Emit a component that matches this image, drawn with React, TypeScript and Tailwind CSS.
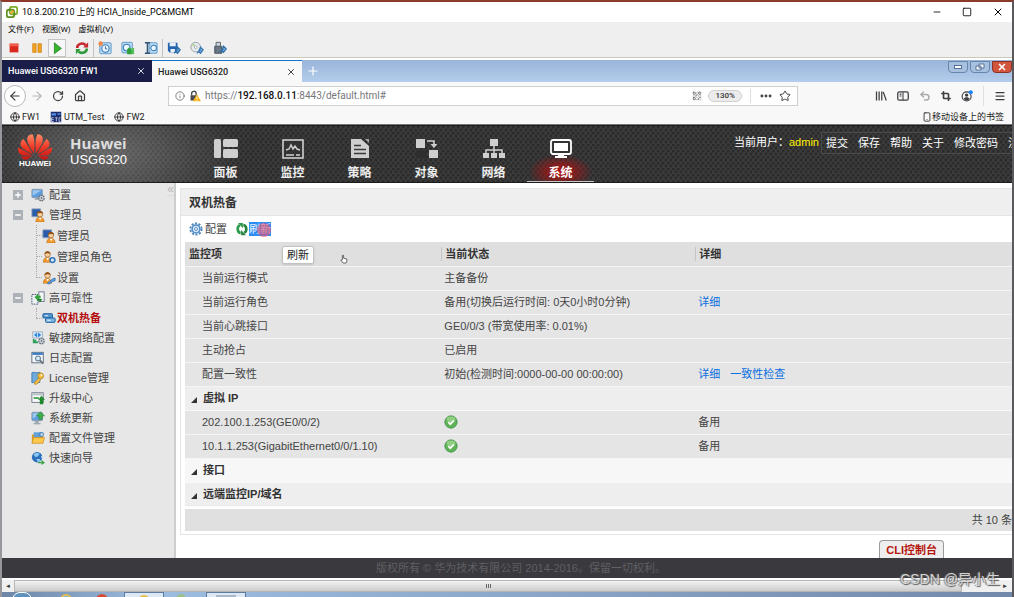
import React, { useState } from "react";
import {
  ArrowLeft,
  ArrowRight,
  Crop,
  Ellipsis,
  Globe,
  House,
  Info,
  Menu,
  Minus,
  Plus,
  QrCode,
  RotateCw,
  Smartphone,
  Square,
  Star,
  Undo2,
  X,
} from "lucide-react";
import { SiHuawei } from "react-icons/si";

type IconProps = { className?: string };

const Svg = ({
  className = "size-3.5",
  children,
}: IconProps & { children: React.ReactNode }) => (
  <svg viewBox="0 0 16 16" className={`shrink-0 ${className}`} fill="none" aria-hidden="true">
    {children}
  </svg>
);

/* ---------- console toolbar icons ---------- */

const VmLogo = () => (
  <Svg className="size-3">
    <rect x="5" y="1" width="10" height="10" rx="3" stroke="#7fae2c" strokeWidth="2.4" />
    <rect x="1" y="5" width="10" height="10" rx="3" stroke="#5f8f1f" strokeWidth="2.4" />
    <path d="M6 10l4-4" stroke="#e8a824" strokeWidth="2.4" />
  </Svg>
);

const StopIcon = () => (
  <Svg>
    <rect x="3" y="3" width="10" height="10" fill="#d9281c" />
    <path d="M3 3h10v3H3z" fill="#f0604f" />
  </Svg>
);

const PauseIcon = () => (
  <Svg>
    <path d="M3 3h4v10H3zM9 3h4v10H9z" fill="#f3a01c" stroke="#c97c10" strokeWidth=".7" />
  </Svg>
);

const PlayIcon = () => (
  <Svg>
    <path d="M5 2l8 6.500-8 6z" fill="#35b42c" stroke="#1d7d1d" strokeWidth=".8" />
  </Svg>
);

const ResetIcon = () => (
  <Svg>
    <path d="M2.500 8a5.500 5 0 0 1 9.500-3.500" stroke="#c5252b" strokeWidth="3" />
    <path d="M9.500 7.500h5.500V1.500z" fill="#c5252b" />
    <path d="M13.500 8.500a5.500 5 0 0 1-9.500 3.500" stroke="#2f9a3c" strokeWidth="3" />
    <path d="M6.500 9H1v6z" fill="#2f9a3c" />
  </Svg>
);

const SnapshotIcon = () => (
  <Svg>
    <rect x="2" y="2" width="13" height="12.500" rx="1" fill="#b9dcf4" stroke="#5c93c4" />
    <circle cx="8.500" cy="8.500" r="4.200" fill="#eef7fd" stroke="#3c7fbd" strokeWidth="1.300" />
    <path d="M8.500 6v3h2" stroke="#2c5f95" />
    <circle cx="3" cy="3" r="2.600" fill="#f08a4a" />
  </Svg>
);

const RevertIcon = () => (
  <Svg>
    <rect x="1" y="1.500" width="12" height="12" rx="1" fill="#b9dcf4" stroke="#5c93c4" />
    <circle cx="6.500" cy="7.500" r="3.800" fill="#eef7fd" stroke="#3c7fbd" strokeWidth="1.200" />
    <path d="M7 15V9.500l2.500-2.500 3 3V15z" fill="#2fa13a" />
    <path d="M12 15V8h3v7z" fill="#57c05a" />
  </Svg>
);

const ManageIcon = () => (
  <Svg>
    <rect x="6" y="2" width="9" height="12" rx="1" fill="#b9dcf4" stroke="#5c93c4" />
    <circle cx="11" cy="8" r="3.200" fill="#eef7fd" stroke="#3c7fbd" strokeWidth="1.200" />
    <path d="M1 2h6M1 14h6M4 2v12" stroke="#2f5579" strokeWidth="1.800" />
  </Svg>
);

const FloppyIcon = () => (
  <Svg>
    <path d="M1 2h11v11H3l-2-2z" fill="#2563ae" />
    <path d="M3 2h7v4H3zM4 9h5v4H4z" fill="#e8f1fa" />
    <path d="M8 14l4-4M12 7l3 3-3 4-2-2z" fill="#7db5e4" stroke="#2f6ea8" strokeWidth="1.600" />
  </Svg>
);

const DiscIcon = () => (
  <Svg>
    <circle cx="6.500" cy="7" r="5.500" fill="#e4e9ec" stroke="#8f9ba3" />
    <path d="M6.500 7L2 4.500 4 2.500z" fill="#aed58a" />
    <circle cx="6.500" cy="7" r="1.500" fill="#fff" stroke="#8f9ba3" strokeWidth=".8" />
    <path d="M8 14l4-4M12 7l3 3-3 4-2-2z" fill="#7db5e4" stroke="#3c7ab2" strokeWidth="1.500" />
  </Svg>
);

const UsbIcon = () => (
  <Svg>
    <path d="M2 6h8v8H2z" fill="#6a7885" stroke="#3c4852" />
    <path d="M3.500 1.500h5V6h-5z" fill="#cfd6db" stroke="#4d5963" />
    <path d="M8 13l4-4M12 6l3 3-3 4-2-2z" fill="#7db5e4" stroke="#2f6ea8" strokeWidth="1.500" />
  </Svg>
);

/* ---------- browser icons ---------- */

const LibraryIcon = () => (
  <Svg className="size-3">
    <path d="M2 2v12M5.500 2v12M9 2v12M11 2.500l4 11.500" stroke="#3f3f43" strokeWidth="1.700" />
  </Svg>
);

const SidebarIcon = () => (
  <Svg className="size-3">
    <rect x="1" y="2.500" width="14" height="11" rx="2" stroke="#3f3f43" strokeWidth="1.700" />
    <path d="M8 2.500v11M3.500 5.500h2.500M3.500 8h2.500" stroke="#3f3f43" strokeWidth="1.400" />
  </Svg>
);

const UndoIcon = () => <Undo2 className="size-3" strokeWidth={3} />;

const AccountIcon = () => (
  <Svg className="size-3">
    <circle cx="7.500" cy="8.500" r="6" stroke="#3f3f43" strokeWidth="1.500" />
    <circle cx="7.500" cy="6.800" r="2.300" fill="#3f3f43" />
    <path d="M3.500 12c1-3 7-3 8 0-2 2.300-6 2.300-8 0z" fill="#3f3f43" />
    <circle cx="13" cy="3" r="2.800" fill="#1a84ff" />
  </Svg>
);

const InsecureLock = () => (
  <Svg className="size-3">
    <path d="M3.500 7V5a3 3 0 0 1 6-.5V7" stroke="#4b4b4f" strokeWidth="1.800" />
    <path d="M2 7h9v7H2z" fill="#4b4b4f" />
    <path d="M10.500 5.500L16 15H5z" fill="#f9b31c" />
    <path d="M10.500 9v3M10.500 13v1" stroke="#fff" strokeWidth="1.200" />
  </Svg>
);

const UtmIcon = () => (
  <Svg className="size-3">
    <path d="M1 1h14v14H1z" fill="#1d2c6d" />
    <path d="M2 3h6v3H2zM10 3h4v2h-4z" fill="#4e8ee0" />
    <path d="M2 9h3M2 11.500h3M2 9v5h3M7 9h3M8.500 9v5M12 9v5M12 9h2M12 14h2" stroke="#cfe0f7" />
  </Svg>
);

/* ---------- main navigation icons ---------- */

const PanelNav = () => (
  <svg viewBox="0 0 24 20" className="h-5 w-6" fill="#cfcfcf" aria-hidden="true">
    <rect x="0" y="0" width="7" height="19" rx="1.500" />
    <rect x="9" y="0" width="15" height="8" rx="1.500" />
    <rect x="9" y="10" width="15" height="9" rx="1.500" />
  </svg>
);

const MonitorNav = () => (
  <svg viewBox="0 0 24 20" className="h-5 w-6" fill="none" stroke="#cfcfcf" aria-hidden="true">
    <rect x="2" y="1" width="20" height="18" fill="#333" strokeWidth="1.600" />
    <path d="M5 11l3-1 2-4 2 4 2-3 2 3 3 1M5 16h8M15 16h4" strokeWidth="1.500" />
  </svg>
);

const PolicyNav = () => (
  <svg viewBox="0 0 24 20" className="h-5 w-6" aria-hidden="true">
    <path d="M3 0h10l8 7v12H3z" fill="#cfcfcf" />
    <path d="M17 0h4v4z" fill="#a5a5a5" />
    <path d="M6 6.500h7M6 10.500h12M6 14.500h12" stroke="#3a3a3a" strokeWidth="1.700" />
  </svg>
);

const ObjectNav = () => (
  <svg viewBox="0 0 24 20" className="h-5 w-6" aria-hidden="true">
    <path d="M1 0h9v9H1zM14 11h9v8h-9z" fill="#cfcfcf" />
    <path d="M12 2h7v4" stroke="#cfcfcf" strokeWidth="1.600" fill="none" />
    <path d="M15.500 5h7L19 9z" fill="#cfcfcf" />
    <path d="M1 11h11v8H1z" fill="#2e2e2e" />
  </svg>
);

const NetworkNav = () => (
  <svg viewBox="0 0 24 20" className="h-5 w-6" fill="#cfcfcf" aria-hidden="true">
    <rect x="8" y="0" width="8" height="7" />
    <path d="M12 7v8M4 15v-4h16v4" fill="none" stroke="#cfcfcf" strokeWidth="1.500" />
    <path d="M1 14h6v5H1zM9 14h6v5H9zM17 14h6v5h-6z" />
  </svg>
);

const SystemNav = () => (
  <svg viewBox="0 0 24 20" className="h-5 w-6" aria-hidden="true">
    <rect x="2" y="1" width="20" height="14" rx="2" fill="#333" stroke="#fff" strokeWidth="1.800" />
    <path d="M5 4h14v8H5zM9 15h6v2h3v2H6v-2h3z" fill="#fff" />
  </svg>
);

/* ---------- tree icons ---------- */

const Screen = () => (
  <>
    <rect x="1" y="1.500" width="12" height="9.500" rx="1" fill="#5e9ee0" stroke="#8b9aa8" />
    <path d="M2 2.500h10l-10 6z" fill="#9cc8f0" />
    <path d="M5 11h4v2.500H4z" fill="#97a3ad" />
  </>
);

const Gear = () => (
  <>
    <circle cx="12" cy="11.500" r="3" fill="#e4e7ea" stroke="#66717b" strokeWidth="1.600" strokeDasharray="2 .6" />
    <circle cx="12" cy="11.500" r="1.100" fill="#66717b" />
  </>
);

const Person = () => (
  <>
    <path d="M3.500 15c0-4 2-5.500 4.500-5.500s5 1.500 5 5.500z" fill="#f29a2c" stroke="#b26614" strokeWidth=".6" />
    <path d="M7 10l1.500 3L10 10z" fill="#fff" />
    <circle cx="8.300" cy="6" r="3.200" fill="#f7cf9d" stroke="#8c531d" strokeWidth=".7" />
    <path d="M5 5.500C5 1.500 11.700 1.500 11.700 5.500 10 4.300 7 4.300 5 5.500z" fill="#8f4f16" />
  </>
);

const ConfigIcon = () => <Svg><Screen /><Gear /></Svg>;

const AdminIcon = () => (
  <Svg>
    <path d="M1 1h10v9H1z" fill="#2a5caa" stroke="#8fa2b8" />
    <g transform="translate(2 1)"><Person /></g>
  </Svg>
);

const RoleIcon = () => (
  <Svg>
    <g transform="translate(-2 -1)"><Person /></g>
    <circle cx="12" cy="11.500" r="2.700" fill="#d9ecfb" stroke="#3478bb" strokeWidth="1.800" />
  </Svg>
);

const UserSetIcon = () => (
  <Svg>
    <g transform="translate(-2 -1)"><Person /></g>
    <path d="M6 14l6-5 3-1v3l-3 1-4 3z" fill="#5b9ee0" stroke="#2d6cae" strokeWidth=".8" />
  </Svg>
);

const ReliabilityIcon = () => (
  <Svg>
    <rect x="1" y="4" width="7" height="11" fill="#eef1f4" stroke="#3f4d70" strokeDasharray="2 1" />
    <rect x="9" y="1" width="6" height="11" fill="#f5f7f9" stroke="#667080" />
    <path d="M4 7l4-4v2.500h3v3H8V11z" fill="#35a53b" />
    <path d="M13 9l-3 4v-2H7V9z" fill="#1f8228" />
  </Svg>
);

const HotStandbyIcon = () => (
  <Svg>
    <rect x="1" y="3" width="11" height="5" rx="1" fill="#4f93cf" stroke="#1e5c98" />
    <rect x="4" y="8" width="11" height="5" rx="1" fill="#77b3e2" stroke="#1e5c98" />
    <path d="M3 5.500h4M6 10.500h4" stroke="#e6f3fd" strokeWidth="1.200" />
  </Svg>
);

const AgileIcon = () => (
  <Svg>
    <rect x="2" y="1" width="11" height="7" fill="#dcecf9" stroke="#9aa8b5" />
    <path d="M4 4.500l2.500-2v4zM11 4.500l-2.500-2v4z" fill="#1f7fe0" stroke="#1f7fe0" />
    <path d="M3 9v4h5M3 11h3" stroke="#2da05c" strokeWidth="1.800" />
    <Gear />
  </Svg>
);

const LogIcon = () => (
  <Svg>
    <rect x="1" y="1.500" width="13" height="12" fill="#f4f7fa" stroke="#53657a" />
    <path d="M1.500 2h12v2.500h-12z" fill="#3c80c8" />
    <circle cx="8" cy="8.500" r="2.800" fill="#d4e8f8" stroke="#6a7f93" strokeWidth="1.200" />
    <path d="M10 10.500l4 4" stroke="#68727c" strokeWidth="2" />
  </Svg>
);

const LicenseIcon = () => (
  <Svg>
    <path d="M1 2c3-1.500 5 1 9-.5V13c-4 1.500-6-1-9 .5z" fill="#6fa9de" stroke="#3f77ae" />
    <circle cx="11" cy="5.500" r="3.300" fill="#f7c247" stroke="#b57d15" />
    <path d="M9 8l-5 5v2h2.500l4.500-5z" fill="#f7c247" stroke="#b57d15" strokeWidth=".8" />
    <circle cx="12" cy="4.700" r="1" fill="#fff" />
  </Svg>
);

const UpgradeIcon = () => (
  <Svg>
    <rect x="1" y="2" width="13" height="11" fill="#f6f8f9" stroke="#6c7681" />
    <path d="M1.500 2.500h12V5h-12z" fill="#b9c3cc" />
    <path d="M3 8h6" stroke="#2c9434" strokeWidth="1.800" />
    <path d="M12 5.500l4 4.500h-2v5h-4v-5H8z" fill="#1f8a2b" />
  </Svg>
);

const UpdateIcon = () => (
  <Svg>
    <Screen />
    <path d="M10.500 1l5 4.500h-2.500v4H9v-4H6z" fill="#3fae4b" stroke="#1f7a2b" strokeWidth=".6" />
    <path d="M3 14.500h8" stroke="#9ba5ae" strokeWidth="1.500" />
  </Svg>
);

const FolderIcon = () => (
  <Svg>
    <path d="M1 4h5l1.500 2H14v8H1z" fill="#e39b1d" />
    <path d="M3 1.500h8v6H3z" fill="#5f9fda" />
    <path d="M3 7.500h12.500L13.500 14H1z" fill="#fbc94e" stroke="#c78618" strokeWidth=".7" />
    <circle cx="12" cy="4" r="2.200" stroke="#4a87c2" strokeWidth="1.300" />
  </Svg>
);

const WizardIcon = () => (
  <Svg>
    <circle cx="7" cy="7" r="6" fill="#2a6fb8" />
    <path d="M3 4c2-2 5-2 7-1L8 6 5 7zM6 9l4 0 1 2-3 2z" fill="#8cc7f4" />
    <path d="M8 12.500h4V10l4 3.500-4 2.500v-2H8z" fill="#3fa446" />
    <path d="M12 6l2 4" stroke="#d3e7f7" strokeWidth="1.600" />
  </Svg>
);

const BlueGear = () => (
  <Svg>
    <circle cx="8" cy="8" r="6.500" stroke="#4e83b8" strokeWidth="2" strokeDasharray="2.400 1.700" />
    <circle cx="8" cy="8" r="4.500" fill="#d6e8f7" stroke="#4e8ac4" strokeWidth="1.800" />
    <circle cx="8" cy="8" r="1.700" fill="#fff" stroke="#4e83b8" />
  </Svg>
);

/* two arrows circling each other */
const RefreshIcon = () => (
  <Svg>
    <path d="M6.500 12.500C2.500 12 1.800 5.500 5.500 3.500" stroke="#2f9a4c" strokeWidth="3" />
    <path d="M3.500 1h5.500v6z" fill="#2f9a4c" />
    <path d="M9.500 3.500c4 .5 4.700 7 1 9" stroke="#25853f" strokeWidth="3" />
    <path d="M12.500 15H7V9z" fill="#25853f" />
  </Svg>
);

const OkIcon = () => (
  <svg viewBox="0 0 16 16" className="size-3.5" role="img" aria-label="正常">
    <circle cx="8" cy="8" r="7" fill="#5db356" stroke="#3f8f43" />
    <ellipse cx="8" cy="5" rx="5" ry="3.200" fill="#8fd083" />
    <path d="M4.800 8l2.300 2.500 4.200-4" fill="none" stroke="#fff" strokeWidth="2" />
  </svg>
);

/* ---------- data ---------- */

const vmTools = [
  { label: "关机", Icon: StopIcon },
  { label: "挂起", Icon: PauseIcon },
  { label: "启动", Icon: PlayIcon },
  { label: "重置", Icon: ResetIcon },
  { label: "生成快照", Icon: SnapshotIcon },
  { label: "恢复快照", Icon: RevertIcon },
  { label: "管理快照", Icon: ManageIcon },
  { label: "软盘", Icon: FloppyIcon },
  { label: "光盘", Icon: DiscIcon },
  { label: "USB", Icon: UsbIcon },
];

const navItems = [
  { name: "面板", Icon: PanelNav },
  { name: "监控", Icon: MonitorNav },
  { name: "策略", Icon: PolicyNav },
  { name: "对象", Icon: ObjectNav },
  { name: "网络", Icon: NetworkNav },
  { name: "系统", Icon: SystemNav },
];

type TreeNode = {
  name: string;
  Icon: React.FC;
  state?: "open" | "closed";
  children?: { name: string; Icon: React.FC }[];
};

const tree: TreeNode[] = [
  { name: "配置", Icon: ConfigIcon, state: "closed" },
  {
    name: "管理员",
    Icon: AdminIcon,
    state: "open",
    children: [
      { name: "管理员", Icon: AdminIcon },
      { name: "管理员角色", Icon: RoleIcon },
      { name: "设置", Icon: UserSetIcon },
    ],
  },
  {
    name: "高可靠性",
    Icon: ReliabilityIcon,
    state: "open",
    children: [{ name: "双机热备", Icon: HotStandbyIcon }],
  },
  { name: "敏捷网络配置", Icon: AgileIcon },
  { name: "日志配置", Icon: LogIcon },
  { name: "License管理", Icon: LicenseIcon },
  { name: "升级中心", Icon: UpgradeIcon },
  { name: "系统更新", Icon: UpdateIcon },
  { name: "配置文件管理", Icon: FolderIcon },
  { name: "快速向导", Icon: WizardIcon },
];

const statusRows = [
  { item: "当前运行模式", status: "主备备份", links: [] },
  { item: "当前运行角色", status: "备用(切换后运行时间: 0天0小时0分钟)", links: ["详细"] },
  { item: "当前心跳接口", status: "GE0/0/3 (带宽使用率: 0.01%)", links: [] },
  { item: "主动抢占", status: "已启用", links: [] },
  { item: "配置一致性", status: "初始(检测时间:0000-00-00 00:00:00)", links: ["详细", "一致性检查"] },
];

const virtualIps = ["202.100.1.253(GE0/0/2)", "10.1.1.253(GigabitEthernet0/0/1.10)"];

/* ---------- sections ---------- */

const ConsoleBar = () => (
  <div className="font-[Roboto,'Noto_Sans_CJK_SC',sans-serif] text-black">
    <div className="flex h-5 items-center bg-white pl-1 pr-2">
      <VmLogo />
      <h1 className="ml-1 text-[9px] leading-5">10.8.200.210 上的 HCIA_Inside_PC&amp;MGMT</h1>
      <div className="ml-auto flex items-center gap-5">
        <button aria-label="最小化"><Minus className="size-2.5" /></button>
        <button aria-label="最大化"><Square className="size-2.5" /></button>
        <button aria-label="关闭"><X className="size-3" /></button>
      </div>
    </div>
    <div className="flex h-4 items-center gap-2 bg-[#efefef] pl-1.5 text-[8px] leading-4">
      <button>文件(F)</button>
      <button>视图(W)</button>
      <button>虚拟机(V)</button>
    </div>
    <div className="flex h-5 items-center border-b border-[#c9c8bd] bg-[#efefef]">
      {vmTools.map(({ label, Icon }, i) => (
        <button
          key={label}
          aria-label={label}
          className={`flex h-[18px] items-center justify-center ${
            i === 2
              ? "w-[18px] border border-[#c4c4c4] bg-[#f7f7f7]"
              : i === 4 || i === 7
                ? "w-[23px] border-l border-[#c4c4c4]"
                : "w-[23px]"
          } ${i === 3 ? "ml-1" : ""}`}
        >
          <Icon />
        </button>
      ))}
    </div>
    <div className="h-0.5 bg-white" />
  </div>
);

const TabStrip = () => (
  <div className="flex h-[22px] bg-linear-to-b from-[#98b4d8] to-[#b4cdec] text-[9px] font-medium leading-5">
    <div className="flex w-[150px] items-center justify-between bg-[#191d48] px-1.5 text-white">
      <button>Huawei USG6320 FW1</button>
      <button aria-label="关闭标签页"><X className="size-2.5" /></button>
    </div>
    <div className="flex w-[150px] items-center justify-between border-t border-[#1473d2] bg-[#f8f8f8] px-1.5 text-[#222]">
      <button>Huawei USG6320</button>
      <button aria-label="关闭标签页"><X className="size-2.5" /></button>
    </div>
    <button aria-label="新标签页" className="px-1 text-white"><Plus className="size-3.5" /></button>
    <div className="ml-auto flex h-3 gap-0.5 pt-px text-white">
      <button aria-label="最小化" className="flex h-3 w-5 items-center justify-center rounded-b-sm border border-[#6885ab] bg-[#a7c0df]">
        <span className="h-1 w-2 border border-[#56709a] bg-white" />
      </button>
      <button aria-label="还原" className="flex h-3 w-5 items-center justify-center rounded-b-sm border border-[#6885ab] bg-[#a7c0df]">
        <svg viewBox="0 0 10 8" className="h-2 w-2.5" fill="#fff" stroke="#56709a" aria-hidden="true">
          <path d="M4 1h5v4H4zM1 3h5v4H1z" />
        </svg>
      </button>
      <button aria-label="关闭" className="flex h-3 w-5 items-center justify-center rounded-b-sm border border-[#8c3428] bg-[#d2553e]">
        <X className="size-2.5" strokeWidth={4} />
      </button>
    </div>
  </div>
);

const AddressBar = () => (
  <div className="flex h-[27px] items-center bg-[#f8f8f8] pr-1.5 text-[#3f3f43]">
    <button aria-label="后退" className="ml-0.5 flex size-[22px] items-center justify-center rounded-full border border-[#b9b9b9] bg-white">
      <ArrowLeft className="size-3.5" />
    </button>
    <button aria-label="前进" className="ml-1 text-[#b5b5b5]"><ArrowRight className="size-3.5" /></button>
    <button aria-label="刷新" className="ml-2"><RotateCw className="size-3" strokeWidth={2.5} /></button>
    <button aria-label="主页" className="ml-2.5"><House className="size-3" strokeWidth={2.5} /></button>
    <div className="ml-[82px] flex h-5 w-[630px] items-center border border-[#cfcfcf] bg-white px-1.5">
      <Info className="size-2.5 text-[#6b6b6f]" />
      <span className="ml-1"><InsecureLock /></span>
      <div className="relative ml-1 h-4 flex-1 text-[10px] leading-4">
        <input
          id="url"
          type="text"
          aria-label="地址"
          defaultValue="https://192.168.0.11:8443/default.html#"
          className="peer absolute inset-0 w-full bg-transparent text-transparent outline-none focus:text-black"
        />
        <label htmlFor="url" className="text-[#77777b] peer-focus:invisible">
          https://<span className="font-medium text-[#111]">192.168.0.11</span>:8443/default.html#
        </label>
      </div>
      <button aria-label="二维码"><QrCode className="size-2.5 text-[#66666a]" /></button>
      <button className="ml-1.5 h-3 rounded-full border border-[#d0d0d0] bg-[#ececec] px-1.5 text-[8px] font-semibold leading-2.5">130%</button>
      <span className="mx-2 h-3.5 w-px bg-[#dedede]" />
      <button aria-label="更多"><Ellipsis className="size-3.5" strokeWidth={3} /></button>
      <button aria-label="收藏" className="ml-1.5"><Star className="size-3" /></button>
    </div>
    <div className="ml-auto flex items-center gap-2.5">
      <button aria-label="书库"><LibraryIcon /></button>
      <button aria-label="侧栏"><SidebarIcon /></button>
      <button aria-label="撤销" className="text-[#ababab]"><UndoIcon /></button>
      <button aria-label="截图"><Crop className="size-2.5" strokeWidth={4} /></button>
      <button aria-label="账户"><AccountIcon /></button>
      <span className="h-5 w-px bg-[#e0e0e0]" />
      <button aria-label="菜单"><Menu className="size-3" strokeWidth={2.5} /></button>
    </div>
  </div>
);

const Bookmarks = () => (
  <div className="flex h-4 items-center gap-2.5 border-b border-[#77777a] bg-[#f8f8f8] px-2 text-[9px] leading-4 text-[#222]">
    <a href="#fw1" className="flex items-center gap-0.5"><Globe className="size-2.5" />FW1</a>
    <a href="#utm" className="flex items-center gap-0.5"><UtmIcon />UTM_Test</a>
    <a href="#fw2" className="flex items-center gap-0.5"><Globe className="size-2.5" />FW2</a>
    <a href="#mobile" className="ml-auto flex items-center"><Smartphone className="size-2.5" />移动设备上的书签</a>
  </div>
);

const Header = () => (
  <header className="flex h-[58px] overflow-hidden border-y border-[#1c1c1c] bg-[#3b3b3c] bg-[radial-gradient(ellipse_130px_70px_at_105px_28px,#bbbbbb66,transparent),radial-gradient(circle_at_1px_1px,#2a2a2a_1px,transparent_2px),radial-gradient(circle_at_4px_4px,#2a2a2a_1px,transparent_2px)] bg-[size:100%_100%,5px_6px,5px_6px]">
    <div className="flex w-[190px] shrink-0 pl-[15px]">
      <div className="flex w-9 flex-col items-center pt-1">
        <svg className="absolute size-0" aria-hidden="true">
          <linearGradient id="petal" x1="0" y1="0" x2="0" y2="1">
            <stop offset="0" stopColor="#ff8a66" />
            <stop offset=".5" stopColor="#ee3a27" />
            <stop offset="1" stopColor="#c61414" />
          </linearGradient>
        </svg>
        <SiHuawei className="size-[34px] shrink-0" fill="url(#petal)" />
        <span className="-mt-1 text-[8px] font-bold leading-2 text-white">HUAWEI</span>
      </div>
      <div className="ml-[17px] pt-2">
        <div className="font-['Open_Sans',sans-serif] text-[15px] font-bold leading-[18px] text-[#dedede]">Huawei</div>
        <div className="text-[13px] leading-4 text-white">USG6320</div>
      </div>
    </div>
    <nav className="flex flex-1">
      {navItems.map(({ name, Icon }, i) => (
        <a
          key={name}
          href={`#nav-${i}`}
          className={`flex w-[67px] flex-col items-center pt-[13px] text-[12px] font-bold leading-4 ${
            i === 5
              ? "border-b border-[#c9c9c9] bg-[radial-gradient(ellipse_32px_18px_at_50%_46px,#b81010,transparent)] text-white"
              : "text-[#ececec]"
          }`}
        >
          <Icon />
          <span className="mt-1.5">{name}</span>
        </a>
      ))}
    </nav>
    <div className="flex w-[278px] shrink-0 items-start overflow-hidden whitespace-nowrap pt-1.5 text-[11px] leading-5 text-white">
      <span>当前用户：</span>
      <span className="text-[#fff200]">admin</span>
      <div className="ml-0.5 flex gap-2.5 border border-r-0 border-[#4b4b4b] pl-1">
        <a href="#commit">提交</a>
        <a href="#save">保存</a>
        <a href="#help">帮助</a>
        <a href="#about">关于</a>
        <a href="#password">修改密码</a>
        <a href="#logout">注销</a>
      </div>
    </div>
  </header>
);

const Sidebar = () => (
  <aside className="relative w-[174px] shrink-0 border-r-2 border-[#cdcdcd] bg-[#e7e7e7] pt-0.5 text-[11px] text-[#444]">
    <button aria-label="收起" className="absolute right-0 top-0 border-b border-[#dadada] text-[12px] leading-3 text-[#b8b8b8]">«</button>
    <ul>
      {tree.map(({ name, Icon, state, children }) => (
        <li key={name}>
          <div className="flex h-5 items-center pl-[11px]">
            {state ? (
              <button
                aria-label={state === "open" ? "折叠" : "展开"}
                className="flex size-2.5 items-center justify-center bg-[#adb2b8] text-white"
              >
                {state === "open" ? <Minus className="size-2" strokeWidth={4} /> : <Plus className="size-2" strokeWidth={4} />}
              </button>
            ) : (
              <span className="size-2.5" />
            )}
            <a href="#tree" className="ml-2 flex items-center gap-1 whitespace-nowrap leading-5">
              <Icon />
              {name}
            </a>
          </div>
          {children && (
            <ul className="ml-[34px]">
              {children.map((child, i) => (
                <li key={child.name} className={`flex items-center ${children.length > 1 ? "h-[21px]" : "h-5"}`}>
                  <span
                    className={`w-1.5 self-stretch border-l border-dotted border-[#aaa] ${
                      i === children.length - 1 ? "mb-[10px]" : ""
                    }`}
                  />
                  <span className="-ml-1.5 w-1.5 border-t border-dotted border-[#aaa]" />
                  <a
                    href="#tree"
                    className={`flex items-center gap-px whitespace-nowrap leading-5 ${
                      child.name === "双机热备" ? "font-bold text-[#b40d0d]" : ""
                    }`}
                  >
                    <child.Icon />
                    {child.name}
                  </a>
                </li>
              ))}
            </ul>
          )}
        </li>
      ))}
    </ul>
  </aside>
);

const GroupRow = ({
  name,
  open,
  onToggle,
  className,
}: {
  name: string;
  open: boolean;
  onToggle: () => void;
  className: string;
}) => (
  <tr className={`h-6 border-b border-[#f9f9f9] ${className}`}>
    <th colSpan={3} className="text-left font-bold text-[#333]">
      <button aria-expanded={open} onClick={onToggle} className="flex items-center pl-1.5 leading-5">
        <svg viewBox="0 0 6 6" className="mt-1 size-1.5" aria-hidden="true">
          <path d="M6 0v6H0z" fill="#333" />
        </svg>
        <span className="ml-1.5">{name}</span>
      </button>
    </th>
  </tr>
);

const StatusTable = () => {
  const [open, setOpen] = useState(true);
  return (
    <div className="relative">
      <table className="w-full table-fixed border-collapse text-left text-[11px] leading-5 text-[#444]">
        <thead>
          <tr className="h-6 border-b border-[#f4f4f4] bg-[#dfdfdf] text-[#333]">
            <th className="w-[31%] pl-1">监控项</th>
            <th className="w-[30.7%]"><span className="block border-l border-[#c4c4c4] pl-[3px] leading-3.5">当前状态</span></th>
            <th><span className="block border-l border-[#c4c4c4] pl-[3px] leading-3.5">详细</span></th>
          </tr>
        </thead>
        <tbody>
          {statusRows.map((row) => (
            <tr key={row.item} className="h-6 border-b border-[#f4f4f4] bg-[#e5e5e5]">
              <td className="pl-[17px]">{row.item}</td>
              <td className="whitespace-nowrap pl-[3px]">{row.status}</td>
              <td className="pl-[3px]">
                {row.links.map((link) => (
                  <a key={link} href="#detail" className="mr-2.5 text-[#0a6fe0]">{link}</a>
                ))}
              </td>
            </tr>
          ))}
          <GroupRow name="虚拟 IP" open={open} onToggle={() => setOpen(!open)} className="bg-[#eeeeee]" />
          {open &&
            virtualIps.map((ip) => (
              <tr key={ip} className="h-6 border-b border-[#f4f4f4] bg-[#e5e5e5]">
                <td className="whitespace-nowrap pl-[17px]">{ip}</td>
                <td className="pl-[3px]"><OkIcon /></td>
                <td className="pl-[3px]">备用</td>
              </tr>
            ))}
          <GroupRow name="接口" open onToggle={() => {}} className="bg-[#f7f7f7]" />
          <GroupRow name="远端监控IP/域名" open onToggle={() => {}} className="bg-[#eeeeee]" />
        </tbody>
      </table>
      <div role="tooltip" className="absolute left-[97px] top-1 rounded-xs border border-[#c2c2c2] bg-white px-1 text-[11px] leading-4 text-[#222] shadow-sm">
        刷新
      </div>
      <svg viewBox="0 0 10 12" className="absolute left-[155px] top-3 h-2.5 w-2" fill="#fff" stroke="#444" aria-hidden="true">
        <path d="M3 7V1.500h1.500V5l4 1v3L7.500 11H4L1 7.500z" />
      </svg>
    </div>
  );
};

const Main = () => (
  <main className="flex min-w-0 flex-1 flex-col bg-white pl-1 pt-[5px]">
    <section className="border border-r-0 border-[#e4e4e4] pb-[3px]">
      <h2 className="border-b border-[#e6e6e6] bg-[#efefef] pl-2 pt-0.5 text-[12px] font-bold leading-6 text-[#333]">双机热备</h2>
      <div className="flex h-[26px] items-center pl-2 text-[11px] leading-4 text-[#444]">
        <button className="flex items-center gap-0.5"><BlueGear />配置</button>
        <button className="relative ml-2 flex items-center">
          <RefreshIcon />
          <span className="bg-[#2e8df5] leading-3.5 text-[#e3f0ff]">刷新</span>
          <span className="absolute right-0 top-px size-3.5 rounded-full bg-[#e8506e99]" />
        </button>
      </div>
      <div className="pl-1">
        <StatusTable />
        <div className="mt-0.5 overflow-hidden whitespace-nowrap bg-[#e0e0e0] py-px text-right text-[11px] leading-5 text-[#444]">共 10 条</div>
      </div>
    </section>
    <button className="ml-auto mr-[68px] mt-auto h-[18px] rounded-t-sm border border-b-0 border-[#9b9b9b] bg-[#eeeeee] px-1.5 text-[11px] font-bold leading-4 text-[#b5160d]">
      CLI控制台
    </button>
  </main>
);

const Taskbar = () => (
  <div className="flex h-[5px] overflow-hidden bg-linear-to-r from-[#6d86a6] via-[#9dbde0] via-15% to-[#7389ab]">
    <span className="ml-2.5 h-4 w-5 rounded-full border border-white bg-[#5d93bd]" />
    <span className="ml-7 mt-0.5 size-3 rounded-full border-2 border-[#e5c052] bg-[#7cb5e6]" />
    <span className="ml-6 mt-0.5 size-3 rounded-full bg-[#d94a35]" />
    <span className="ml-4 flex h-4 w-10 justify-center border border-[#5e7b9f] bg-[#dce8f6]">
      <span className="mt-0.5 size-3 rounded-full bg-[#e9bd3e]" />
    </span>
    <span className="ml-3 mt-0.5 size-2.5 rounded-full bg-[#9cc08a]" />
    <span className="ml-5 flex h-4 w-10 justify-center border border-[#5e7b9f] bg-[#dce8f6]">
      <span className="mt-0.5 h-3 w-5 bg-[#a9b9c9]" />
    </span>
  </div>
);

const App = () => {
  return (
    <div className="relative min-h-screen overflow-hidden border-x-2 border-t-2 border-l-[#98989c] border-r-[#5a5a5c] border-t-[#8c3a2a] bg-white font-['Liberation_Sans','Noto_Sans_CJK_SC',sans-serif]">
      <ConsoleBar />
      <div className="font-[Roboto,'Noto_Sans_CJK_SC',sans-serif]">
        <TabStrip />
        <AddressBar />
        <Bookmarks />
      </div>
      <Header />
      <div className="flex min-h-[375px]">
        <Sidebar />
        <Main />
      </div>
      <footer className="overflow-hidden bg-[#3a393d] pl-7 text-center text-[11px] leading-5 text-[#5f5f64]">
        版权所有 © 华为技术有限公司 2014-2016。保留一切权利。
      </footer>
      <div className="mt-0.5 flex h-3 items-center bg-[#f0f0f0] text-[#333]">
        <button aria-label="向左滚动" className="w-3 text-[6px] leading-3">◄</button>
        <div className="flex h-3 flex-1 items-center justify-center border border-[#b5b5b5] bg-linear-to-b from-[#f3f3f3] to-[#cccccc]">
          <span className="flex gap-px">
            <span className="h-1 w-px bg-[#666]" />
            <span className="h-1 w-px bg-[#666]" />
            <span className="h-1 w-px bg-[#666]" />
          </span>
        </div>
        <button aria-label="向右滚动" className="w-[50px] pr-1 text-right text-[6px] leading-3">►</button>
      </div>
      <Taskbar />
      <div className="absolute bottom-1.5 right-3 text-[14px] leading-6 text-[#d4d4d4] [text-shadow:1px_1px_1px_#555,-1px_0_1px_#777]">
        CSDN @异小生
      </div>
    </div>
  );
};

export default App;
